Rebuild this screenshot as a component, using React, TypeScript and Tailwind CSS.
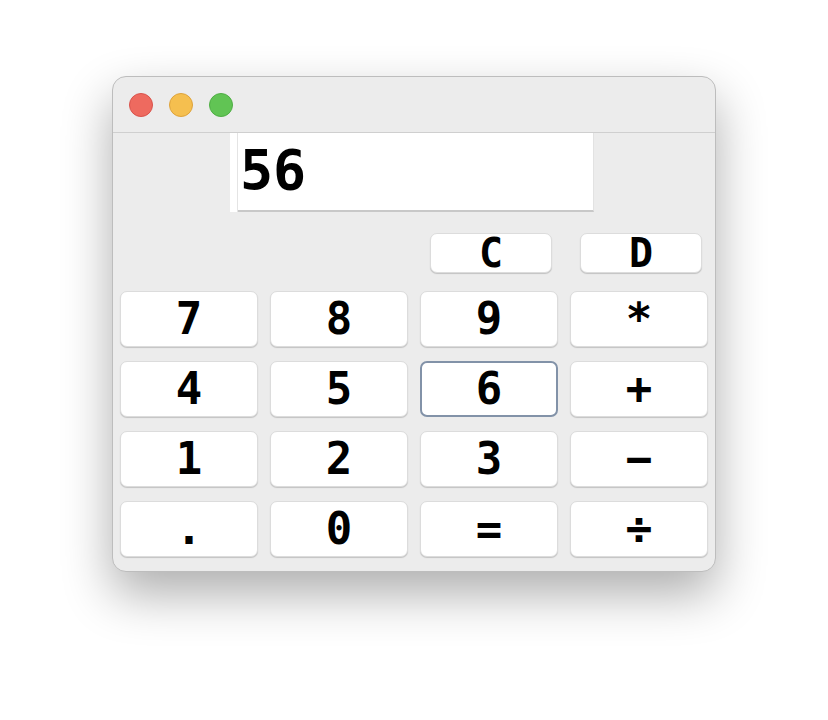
const rows = [
  ["7", "8", "9", "*"],
  ["4", "5", "6", "+"],
  ["1", "2", "3", "−"],
  [".", "0", "=", "÷"],
];

const mono = { fontFamily: '"DejaVu Sans Mono", "Liberation Mono", monospace' };

function Key({ label, focused, small }: { label: string; focused?: boolean; small?: boolean }) {
  return (
    <button
      style={mono}
      className={`flex items-center justify-center rounded-[7px] bg-white font-bold text-black leading-none ${
        small ? "h-[40px] w-[122px] text-[40px]" : "h-[56px] text-[44px]"
      } ${
        focused
          ? "border-2 border-[#8292a8] shadow-none"
          : "border border-[#dcdcdc] shadow-[0_1px_1px_rgba(0,0,0,0.18)]"
      }`}
    >
      {label}
    </button>
  );
}

export default function App() {
  return (
    <div className="flex h-[720px] w-full justify-center bg-white pt-[76px]">
      <div className="flex h-[496px] w-[604px] flex-col overflow-hidden rounded-[14px] border border-[#bdbdbd] bg-[#ececec] shadow-[0_22px_50px_rgba(0,0,0,0.32)]">
        <div className="flex h-[56px] shrink-0 items-center gap-4 border-b border-[#cfcfcf] pl-[16px]">
          <span className="h-[24px] w-[24px] rounded-full border border-[#d9534c] bg-[#ee6a5f]" />
          <span className="h-[24px] w-[24px] rounded-full border border-[#dea33c] bg-[#f5bf4f]" />
          <span className="h-[24px] w-[24px] rounded-full border border-[#4fae44] bg-[#61c454]" />
        </div>

        <div className="ml-[117px] flex h-[79px] w-[364px]">
          <div className="w-[7px] bg-white" />
          <div className="w-px bg-[#e4e4e4]" />
          <div
            style={mono}
            className="flex flex-1 items-center border-b-2 border-r border-b-[#c8c8c8] border-r-[#e2e2e2] bg-white pl-[2px] pb-[2px] text-[55px] font-bold leading-none text-black"
          >
            56
          </div>
        </div>

        <div className="mt-[21px] flex justify-end gap-[28px] pr-[13px]">
          <Key label="C" small />
          <Key label="D" small />
        </div>

        <div className="mt-[18px] grid grid-cols-4 gap-x-[12px] gap-y-[14px] px-[7px]">
          {rows.flat().map((k) => (
            <Key key={k} label={k} focused={k === "6"} />
          ))}
        </div>
      </div>
    </div>
  );
}
